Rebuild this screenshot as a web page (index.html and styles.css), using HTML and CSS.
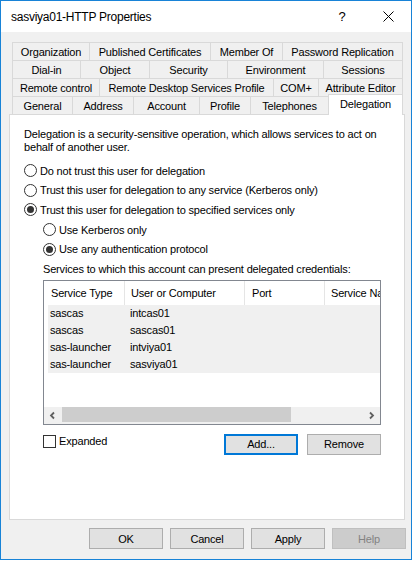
FILE: index.html
```html
<!DOCTYPE html>
<html>
<head>
<meta charset="utf-8">
<link rel="stylesheet" href="styles.css">
</head>
<body>
<div class="window">
  <div class="titlebar">
    <div class="title">sasviya01-HTTP Properties</div>
    <div class="tb-btn help">?</div>
    <div class="tb-btn">
      <svg width="11" height="11" viewBox="0 0 11 11"><path d="M0.5 0.5 L10.5 10.5 M10.5 0.5 L0.5 10.5" stroke="#000" stroke-width="1" fill="none"/></svg>
    </div>
  </div>
  <div class="body">
    <div class="tabs">
      <div class="tabrow r1">
        <div class="tab">Organization</div>
        <div class="tab">Published Certificates</div>
        <div class="tab">Member Of</div>
        <div class="tab">Password Replication</div>
      </div>
      <div class="tabrow r2">
        <div class="tab">Dial-in</div>
        <div class="tab">Object</div>
        <div class="tab">Security</div>
        <div class="tab">Environment</div>
        <div class="tab">Sessions</div>
      </div>
      <div class="tabrow r3">
        <div class="tab">Remote control</div>
        <div class="tab">Remote Desktop Services Profile</div>
        <div class="tab">COM+</div>
        <div class="tab">Attribute Editor</div>
      </div>
      <div class="tabrow r4">
        <div class="tab">General</div>
        <div class="tab">Address</div>
        <div class="tab">Account</div>
        <div class="tab">Profile</div>
        <div class="tab">Telephones</div>
        <div class="tab sel">Delegation</div>
      </div>
    </div>
    <div class="panel">
      <div class="desc">Delegation is a security-sensitive operation, which allows services to act on<br>behalf of another user.</div>
      <div class="opts">
        <div class="opt"><span class="radio"></span>Do not trust this user for delegation</div>
        <div class="opt"><span class="radio"></span>Trust this user for delegation to any service (Kerberos only)</div>
        <div class="opt"><span class="radio on"></span>Trust this user for delegation to specified services only</div>
        <div class="sub">
          <div class="opt"><span class="radio"></span>Use Kerberos only</div>
          <div class="opt"><span class="radio on"></span>Use any authentication protocol</div>
          <div class="opt">Services to which this account can present delegated credentials:</div>
          <div class="listbox">
            <div class="lhead">
              <div class="hcell c1">Service Type</div>
              <div class="hcell c2">User or Computer</div>
              <div class="hcell c3">Port</div>
              <div class="hcell c4">Service Name</div>
            </div>
            <div class="lrows">
              <div class="lrow"><div class="rc1">sascas</div><div class="rc2">intcas01</div><div></div><div></div></div>
              <div class="lrow"><div class="rc1">sascas</div><div class="rc2">sascas01</div><div></div><div></div></div>
              <div class="lrow"><div class="rc1">sas-launcher</div><div class="rc2">intviya01</div><div></div><div></div></div>
              <div class="lrow"><div class="rc1">sas-launcher</div><div class="rc2">sasviya01</div><div></div><div></div></div>
            </div>
            <div class="hscroll">
              <div class="sb-btn"><svg width="17" height="17" viewBox="0 0 17 17"><polyline points="10,5.5 7,8.5 10,11.5" fill="none" stroke="#606060" stroke-width="1.8"/></svg></div>
              <div class="sb-track"><div class="sb-thumb"></div></div>
              <div class="sb-btn"><svg width="17" height="17" viewBox="0 0 17 17"><polyline points="7,5.5 10,8.5 7,11.5" fill="none" stroke="#606060" stroke-width="1.8"/></svg></div>
            </div>
          </div>
          <div class="ctrl">
            <div class="check"><span class="cbox"></span>Expanded</div>
            <div class="btns">
              <button class="btn default">Add...</button>
              <button class="btn">Remove</button>
            </div>
          </div>
        </div>
      </div>
    </div>
    <div class="footer">
      <button class="btn">OK</button>
      <button class="btn">Cancel</button>
      <button class="btn">Apply</button>
      <button class="btn disabled">Help</button>
    </div>
  </div>
</div>
</body>
</html>
```
FILE: styles.css
```css
* { box-sizing: border-box; }
html, body { margin: 0; padding: 0; background: #fff; }
body { font-family: "Liberation Sans", Arial, sans-serif; font-size: 11px; letter-spacing: -0.17px; color: #000; }

.window {
  width: 412px; height: 560px;
  border: 1px solid #1883d7;
  background: #f0f0f0;
  display: flex; flex-direction: column;
}
.titlebar {
  flex: none; height: 31px; background: #fff;
  display: flex; align-items: center; padding-left: 10px;
}
.title { flex: 1; font-size: 12px; letter-spacing: -0.25px; }
.tb-btn { width: 46px; height: 31px; display: flex; align-items: center; justify-content: center; }
.tb-btn.help { font-size: 13px; letter-spacing: 0; }

.body { flex: 1; padding: 10px 5px 0 8px; display: flex; flex-direction: column; }

.tabs { margin-left: 3px; width: 391px; }
.tabrow { display: grid; height: 18px; grid-template-rows: 18px; }
.r1 { grid-template-columns: 77px 121px 72px 121px; }
.r2 { grid-template-columns: 68px 69px 78px 96px 80px; }
.r3 { grid-template-columns: 87px 174px 45px 85px; }
.r4 { grid-template-columns: 60px 61px 66px 51px 78px 75px; }
.tab {
  border-top: 1px solid #d9d9d9; border-left: 1px solid #d9d9d9;
  background: #f0f0f0;
  display: flex; align-items: center; justify-content: center;
  white-space: nowrap; overflow: hidden;
}
.tab:last-child { border-right: 1px solid #d9d9d9; }
.tab.sel {
  align-self: start; height: 21px; margin-top: -2px;
  background: #fff; position: relative; z-index: 1;
  padding-bottom: 2px;
}

.panel {
  width: 396px; height: 406px;
  border: 1px solid #d9d9d9; background: #fff;
  padding: 13px 0 0 14px;
}
.desc { line-height: 13px; white-space: nowrap; }
.opts { margin-top: 7px; }
.opt { height: 19.6px; display: flex; align-items: center; white-space: nowrap; }
.radio {
  flex: none; width: 13px; height: 13px; margin-right: 3px;
  border: 1px solid #333; border-radius: 50%;
  display: flex; align-items: center; justify-content: center;
}
.radio.on::after { content: ""; width: 7px; height: 7px; border-radius: 50%; background: #333; }
.sub { padding-left: 19px; }

.listbox {
  margin-top: 1px; width: 338px; height: 145px;
  border: 1px solid #828790; background: #fff;
  display: flex; flex-direction: column;
}
.lhead { flex: none; height: 24px; display: grid; grid-template-columns: 81px 120px 80px 55px; }
.hcell {
  display: flex; align-items: center; padding-left: 6px;
  white-space: nowrap; overflow: hidden;
  border-right: 1px solid #e5e5e5;
}
.hcell.c1 { padding-left: 7px; }
.hcell.c3 { padding-left: 7px; }
.hcell.c4 { border-right: none; }
.lrows { flex: 1; padding-left: 4px; }
.lrow {
  height: 17px; background: #f0f0f0;
  display: grid; grid-template-columns: 77px 120px 80px 1fr; align-items: center;
  white-space: nowrap;
}
.rc1 { padding-left: 2px; }
.rc2 { padding-left: 5px; }
.hscroll { flex: none; height: 17px; display: flex; background: #f0f0f0; }
.sb-btn { width: 17px; height: 17px; flex: none; }
.sb-btn svg { display: block; }
.sb-track { flex: 1; padding: 0 0 1px 1px; }
.sb-thumb { width: 229px; height: 15px; background: #cdcdcd; }

.ctrl { margin-top: 9px; width: 338px; display: flex; align-items: flex-start; }
.check { margin-top: 1px; height: 13px; display: flex; align-items: center; }
.cbox { width: 13px; height: 13px; border: 1px solid #333; margin-right: 3px; }
.btns { margin-left: auto; display: flex; gap: 9px; }

.btn {
  width: 74px; height: 21px; padding: 0; margin: 0;
  font: inherit; letter-spacing: inherit; color: #000;
  border: 1px solid #adadad; background: #e1e1e1;
  display: flex; align-items: center; justify-content: center;
}
.btn.default { border: 2px solid #0078d7; }
.btn.disabled { background: #cccccc; border-color: #bfbfbf; color: #838383; }

.footer { margin-top: 8px; display: flex; justify-content: flex-end; gap: 7px; }
```
